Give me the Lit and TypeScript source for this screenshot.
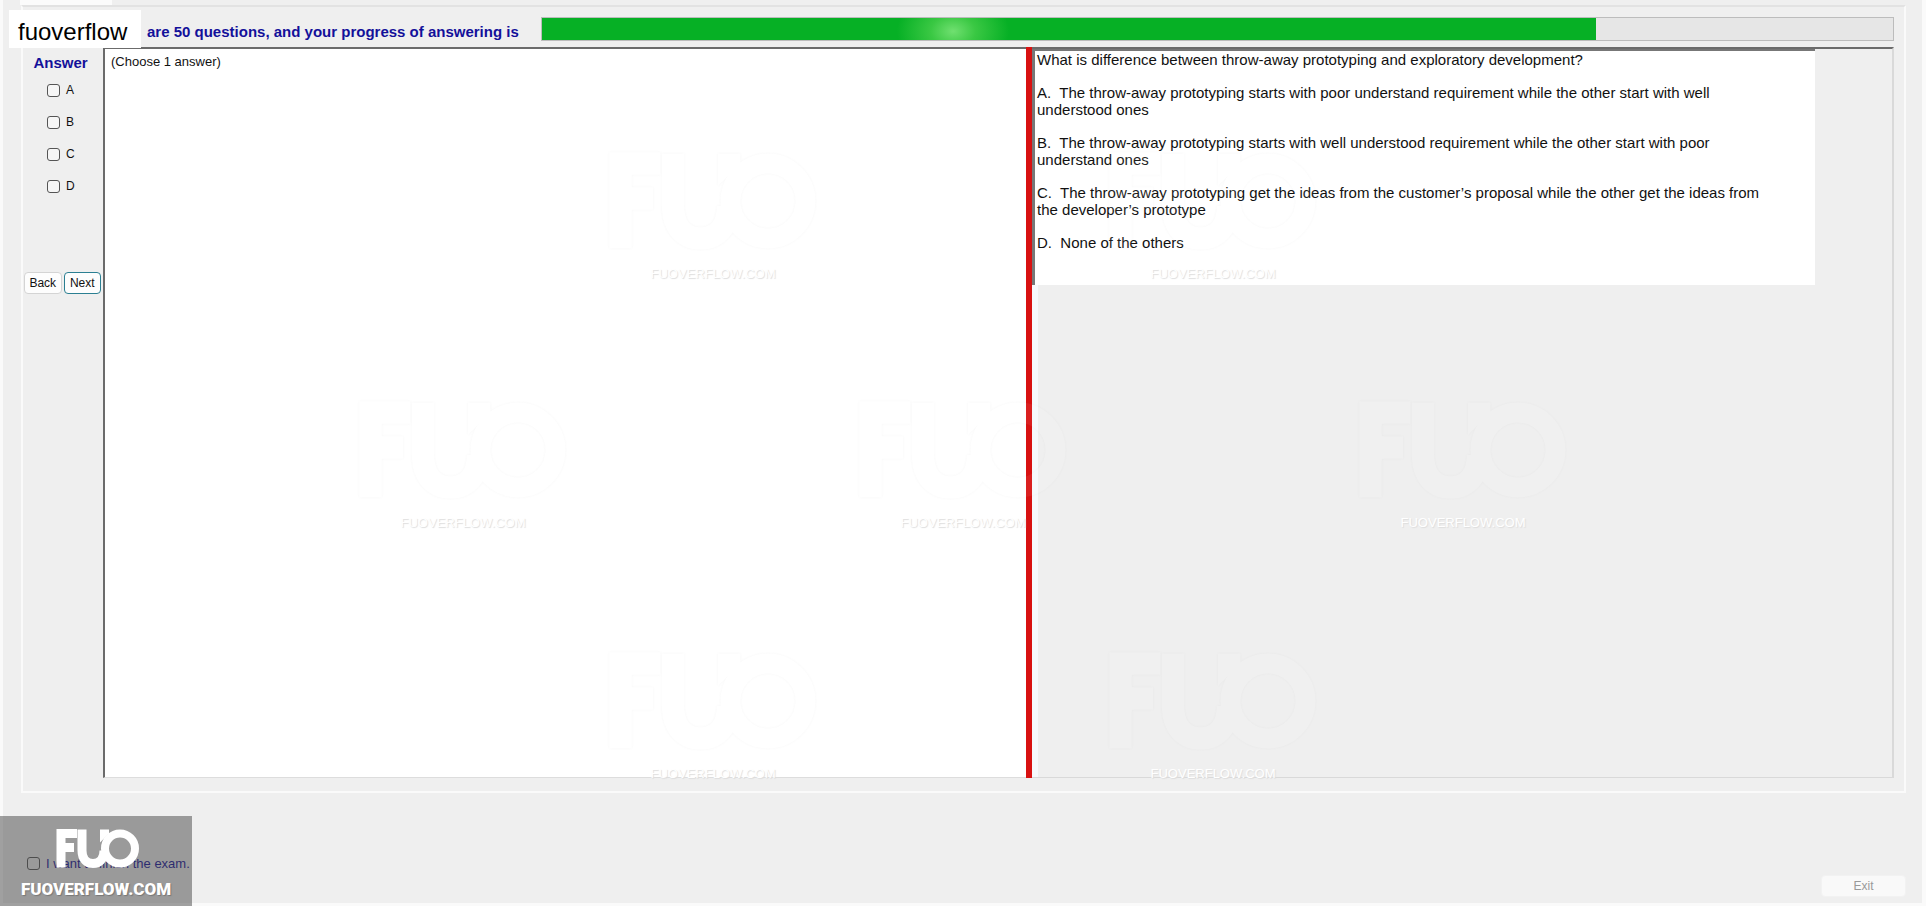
import { LitElement, html, css, svg } from "lit";
import { customElement, state } from "lit/decorators.js";

const OPTIONS = ["A", "B", "C", "D"];

const QUESTION = [
  "What is difference between throw-away prototyping and exploratory development?",
  "A.\u00a0 The throw-away prototyping starts with poor understand requirement while the other start with well understood ones",
  "B.\u00a0 The throw-away prototyping starts with well understood requirement while the other start with poor understand ones",
  "C.\u00a0 The throw-away prototyping get the ideas from the customer\u2019s proposal while the other get the ideas from the developer\u2019s prototype",
  "D.\u00a0 None of the others",
];

const mark = svg`
  <path d="M5 39V5H21M6 19H18" fill="none" stroke="currentColor" stroke-width="9" />
  <path d="M26 1V22C26 31 31 35 37 35C43 35 48 31 48 22" fill="none" stroke="currentColor" stroke-width="9" />
  <path d="M44 1H53V5L44 14Z" fill="currentColor" />
  <circle cx="64" cy="20" r="15" fill="none" stroke="currentColor" stroke-width="8" />`;

@customElement("fuo-stamp")
export class FuoStamp extends LitElement {
  static styles = css`
    :host { display: flex; flex-direction: column; align-items: center; width: 216px; }
    .mark { width: 210px; height: 106px; color: #fff; opacity: 0.06; filter: drop-shadow(0 0 1px #777); }
    .site { margin-top: 12px; font: 13px/16px "Liberation Sans", Arial, sans-serif; color: #fff; text-shadow: 1px 1px 1px #ddd; }
  `;
  render() {
    return html`<svg class="mark" viewBox="0 0 84 40" aria-hidden="true">${mark}</svg>
      <span class="site">FUOVERFLOW.COM</span>`;
  }
}

@customElement("app-root")
export class AppRoot extends LitElement {
  @state() private finish = false;

  static styles = css`
    :host {
      display: block;
      font-family: "Liberation Sans", Arial, sans-serif;
      color: #111;
      background: #efefef;
    }
    * { box-sizing: border-box; }
    .window {
      position: relative;
      display: flex;
      flex-direction: column;
      min-height: 100vh;
      border: solid #fafafa;
      border-width: 0 4px 3px 3px;
    }
    .tab { width: 92px; height: 5px; margin-left: 17px; background: #fbfbfb; }
    .group {
      flex: 1;
      display: flex;
      flex-direction: column;
      margin: 0 16px 0 18px;
      padding: 10px 10px 13px 0;
      border: 2px solid #fafafa;
      border-top-color: #e2e2e2;
    }
    .head { display: flex; height: 24px; gap: 22px; padding-left: 124px; }
    .title { margin: 0; padding-top: 3px; font-size: 15px; line-height: 24px; font-weight: bold; color: #13109a; white-space: nowrap; }
    .bar { flex: 1; height: 24px; border: 1px solid #bcbcbc; background: #e6e6e6; }
    .fill {
      height: 100%;
      background:
        radial-gradient(ellipse 56px 40px at 39% 60%, #70e070 0, rgba(80, 210, 80, 0.7) 40%, transparent 100%),
        #06b025;
    }
    .body { flex: 1; display: flex; margin-top: 6px; }
    .side { width: 80px; display: flex; flex-direction: column; }
    .caption { margin: 0; padding: 7px 5px 0 0; text-align: center; font-size: 15px; line-height: 18px; color: #13109a; }
    .options { display: flex; flex-direction: column; gap: 16px; margin: 10px 0 0 24px; min-height: 190px; }
    .option { display: flex; align-items: center; gap: 6px; height: 16px; font-size: 12px; }
    input[type="checkbox"] {
      appearance: none;
      width: 13px;
      height: 13px;
      margin: 0;
      border: 1px solid #555;
      border-radius: 3px;
      background: #f6f6f6;
    }
    button { font: 12px/16px "Liberation Sans", Arial, sans-serif; padding: 0; height: 22px; border: 1px solid #d4d4d4; border-radius: 4px; background: #fdfdfd; color: #111; }
    .nav { display: flex; gap: 2px; padding: 0 2px 0 1px; }
    .nav button { flex: 1; }
    .nav .next { border-color: #2b7f92; }
    .answer { flex: 908; padding: 4px 6px; border: solid #6b6b6b; border-width: 2px 0 0 2px; border-bottom: 1px solid #ddd; background: #fff; font-size: 13px; line-height: 18px; }
    .split { width: 6px; background: #d81111; }
    .right {
      flex: 859;
      border: solid #d9d9d9;
      border-width: 2px 2px 1px 0;
      border-top-color: #6b6b6b;
      background: linear-gradient(to right, #f6f9fc 6px, #efefef 6px);
    }
    .question {
      width: 91%;
      min-height: 236px;
      display: flex;
      flex-direction: column;
      gap: 16px;
      padding: 0 40px 0 2px;
      border: solid #777;
      border-width: 2px 0 0 3px;
      background: #fff;
      font-size: 15px;
      line-height: 17px;
    }
    .question p { margin: 0; }
    .foot { display: flex; justify-content: space-between; height: 110px; padding: 0 16px 0 24px; }
    .finish { display: flex; align-items: center; gap: 6px; height: 16px; margin-top: 62px; font-size: 13px; color: #13109a; }
    .finish input { background: transparent; }
    .exit { width: 85px; margin-top: 82px; border-color: #f2f2f2; background: #f9f9f9; color: #999; }
    .brand { position: absolute; left: 6px; top: 10px; width: 132px; height: 38px; padding-left: 9px; background: #fff; color: #000; font-size: 24px; line-height: 43px; }
    .badge {
      position: absolute;
      left: -3px;
      bottom: -3px;
      width: 192px;
      height: 90px;
      display: flex;
      flex-direction: column;
      align-items: center;
      padding-top: 12px;
      background: rgba(70, 70, 70, 0.5);
      color: #fff;
      pointer-events: none;
    }
    .logo { width: 84px; height: 41px; margin-left: 3px; }
    .site { margin-top: 8px; font: 900 17px/24px Roboto, "Liberation Sans", sans-serif; text-shadow: 1px 1px 1px #777; }
    .stamps { position: absolute; inset: 0; pointer-events: none; }
    fuo-stamp { position: absolute; margin: -126px 0 0 -111px; }
  `;

  private stamps: [number, number][] = [
    [713, 274], [1213, 274], [463, 523], [963, 523], [1463, 523], [713, 774], [1213, 774],
  ];

  render() {
    return html`
      <main class="window">
        <div class="tab"></div>
        <section class="group">
          <header class="head">
            <h1 class="title" id="progress">are 50 questions, and your progress of answering is</h1>
            <div class="bar" role="progressbar" aria-labelledby="progress" aria-valuenow="78">
              <div class="fill" style="width: 78%"></div>
            </div>
          </header>
          <div class="body">
            <aside class="side">
              <h2 class="caption">Answer</h2>
              <div class="options" role="group" aria-label="Answer">
                ${OPTIONS.map((o) => html`<label class="option"><input type="checkbox" name=${o} />${o}</label>`)}
              </div>
              <div class="nav">
                <button>Back</button>
                <button class="next">Next</button>
              </div>
            </aside>
            <section class="answer">(Choose 1 answer)</section>
            <div class="split"></div>
            <section class="right">
              <article class="question">${QUESTION.map((q) => html`<p>${q}</p>`)}</article>
            </section>
          </div>
        </section>
        <footer class="foot">
          <label class="finish">
            <input type="checkbox" .checked=${this.finish}
              @change=${(e: Event) => (this.finish = (e.target as HTMLInputElement).checked)} />
            I want to finish the exam.
          </label>
          <button class="exit" ?disabled=${!this.finish}>Exit</button>
        </footer>
        <div class="stamps" aria-hidden="true">
          ${this.stamps.map(([x, y]) => html`<fuo-stamp style="left:${x}px;top:${y}px"></fuo-stamp>`)}
        </div>
        <div class="brand">fuoverflow</div>
        <div class="badge">
          <svg class="logo" viewBox="0 0 84 40" aria-hidden="true">${mark}</svg>
          <span class="site">FUOVERFLOW.COM</span>
        </div>
      </main>
    `;
  }
}
